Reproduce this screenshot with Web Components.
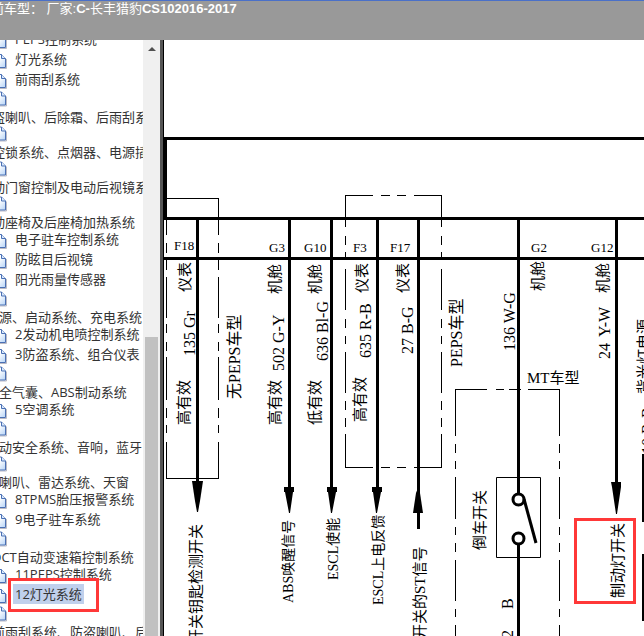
<!DOCTYPE html>
<html lang="zh-CN">
<head>
<meta charset="utf-8">
<title>长丰猎豹CS10 电路图</title>
<style>
  body {
    margin: 0;
  }
</style>
</head>
<body>
<manual-page>
  <vehicle-bar slot="header">前车型： 厂家:<b>C-</b>长丰猎豹<b>CS102016-2017</b></vehicle-bar>
  <system-tree slot="sidebar">
    <tree-item>PEPS控制系统</tree-item>
    <tree-item>灯光系统</tree-item>
    <tree-item>前雨刮系统</tree-item>
    <tree-item wrapped cut>盗喇叭、后除霜、后雨刮系</tree-item>
    <tree-item wrapped cut>控锁系统、点烟器、电源插</tree-item>
    <tree-item wrapped cut>动门窗控制及电动后视镜系</tree-item>
    <tree-item wrapped cut>动座椅及后座椅加热系统</tree-item>
    <tree-item>电子驻车控制系统</tree-item>
    <tree-item>防眩目后视镜</tree-item>
    <tree-item>阳光雨量传感器</tree-item>
    <tree-item wrapped>源、启动系统、充电系统</tree-item>
    <tree-item>2发动机电喷控制系统</tree-item>
    <tree-item>3防盗系统、组合仪表</tree-item>
    <tree-item wrapped>全气囊、ABS制动系统</tree-item>
    <tree-item>5空调系统</tree-item>
    <tree-item wrapped>动安全系统、音响，蓝牙</tree-item>
    <tree-item wrapped>喇叭、雷达系统、天窗</tree-item>
    <tree-item>8TPMS胎压报警系统</tree-item>
    <tree-item>9电子驻车系统</tree-item>
    <tree-item wrapped cut>DCT自动变速箱控制系统</tree-item>
    <tree-item>11PEPS控制系统</tree-item>
    <tree-item selected>12灯光系统</tree-item>
    <tree-item wrapped cut>前雨刮系统、防盗喇叭、后</tree-item>
  </system-tree>
  <wiring-diagram></wiring-diagram>
</manual-page>

<script>
class ManualPage extends HTMLElement {
  constructor() {
    super();

    this.attachShadow({ mode: 'open' });
  }

  connectedCallback() {
    this.shadowRoot.innerHTML = `
      <style>
        :host {
          display: flex;
          flex-direction: column;
          height: 100vh;
          overflow: hidden;
          background: #fff;
        }

        main {
          display: flex;
          flex: 1;
          min-height: 0;
        }
      </style>
      <slot name="header"></slot>
      <main>
        <slot name="sidebar"></slot>
        <slot></slot>
      </main>
    `;
  }
}

class VehicleBar extends HTMLElement {
  constructor() {
    super();

    this.attachShadow({ mode: 'open' });
  }

  connectedCallback() {
    this.shadowRoot.innerHTML = `
      <style>
        :host {
          display: block;
          flex: none;
          box-sizing: border-box;
          height: 40px;
          border-top: 1px solid #4a70c8;
          background: #999;
          color: #fff;
          font: 13px/16px "Liberation Sans", "Noto Sans CJK SC", sans-serif;
          white-space: nowrap;
          overflow: hidden;
        }

        header {
          margin-left: -9px;
        }
      </style>
      <header><slot></slot></header>
    `;
  }
}

class SystemTree extends HTMLElement {
  constructor() {
    super();

    this.attachShadow({ mode: 'open' });
  }

  connectedCallback() {
    this.shadowRoot.innerHTML = `
      <style>
        :host {
          display: flex;
          flex: none;
          position: relative;
          overflow: hidden;
          border-right: 1px solid #000;
          font: 13px/20px "Open Sans", "Noto Sans CJK SC", sans-serif;
          color: #333;
        }

        nav {
          width: 143px;
          margin-top: -11px;
          overflow: hidden;
        }

        .track {
          display: flex;
          flex-direction: column;
          align-items: center;
          width: 17px;
          background: #f0f0f0;
          border-right: 3px solid #555;
        }

        .track svg {
          width: 8px;
          height: 4px;
          margin-top: 7px;
          fill: #505050;
        }

        .thumb {
          flex: 1;
          width: 13px;
          margin-top: 286px;
          background: #c1c1c1;
        }
      </style>
      <nav><slot></slot></nav>
      <div class="track">
        <svg viewBox="0 0 8 4"><path d="M4 0l4 4H0z"/></svg>
        <div class="thumb"></div>
      </div>
    `;
  }
}

class TreeItem extends HTMLElement {
  constructor() {
    super();

    this.attachShadow({ mode: 'open' });
  }

  connectedCallback() {
    this.shadowRoot.innerHTML = `
      <style>
        :host {
          display: block;
          position: relative;
          white-space: nowrap;
        }

        a {
          display: flex;
          align-items: center;
          gap: 6px;
          height: 20px;
          margin-left: -9px;
          color: inherit;
          text-decoration: none;
        }

        svg {
          flex: none;
          width: 16px;
          height: 16px;
          margin-top: 4px;
        }

        span {
          padding: 0 2px;
        }

        /* long names drop below their icon */
        :host([wrapped]) a {
          display: block;
          height: 35px;
        }

        :host([wrapped]) svg {
          display: block;
          height: 19px;
          margin-top: 0;
        }

        :host([wrapped]) span {
          display: block;
          padding: 0 0 0 8px;
          line-height: 18px;
        }

        :host([wrapped][cut]) span {
          padding: 0 0 0 1px;
        }

        :host([selected]) span {
          background: #c0d0ec;
        }

        .mark {
          display: none;
        }

        :host([selected]) .mark {
          display: block;
          position: absolute;
          left: 8px;
          top: -6px;
          box-sizing: border-box;
          width: 91px;
          height: 34px;
          border: 3px solid #ff3838;
        }
      </style>
      <a href="#">
        <svg viewBox="0 0 16 16" aria-hidden="true">
          <defs>
            <linearGradient id="sheet" x2="1" y2="1">
              <stop offset="0.4" stop-color="#fff"/>
              <stop offset="1" stop-color="#b5d3f7"/>
            </linearGradient>
          </defs>
          <path d="M3 15.5h12.5V6" fill="none" stroke="#b9b9c4"/>
          <path d="M2.500 1.500h8l4 4v9h-12z" fill="url(#sheet)" stroke="#4a70b4"/>
          <path d="M10.500 1.500v4h4" fill="#dbe9fb" stroke="#4a70b4"/>
        </svg>
        <span><slot></slot></span>
      </a>
      <div class="mark"></div>
    `;
  }
}

// [x, y, text]
const PINS = [
  [174, 250, 'F18'],
  [269, 252, 'G3'],
  [304, 252, 'G10'],
  [353, 252, 'F3'],
  [390, 252, 'F17'],
  [531, 252, 'G2'],
  [591, 252, 'G12'],
];

// upright-reading labels turned a quarter left: [baseline x, bottom y, class, text]
const LABELS = [
  [190, 292, 'note', '仪表'],
  [195, 356, 'wire', '135 Gr'],
  [189, 425, 'note', '高有效'],
  [240, 399, 'model', '无PEPS车型'],
  [280, 294, 'note', '机舱'],
  [284, 371, 'wire', '502 G-Y'],
  [280, 425, 'note', '高有效'],
  [320, 294, 'note', '机舱'],
  [328, 361, 'wire', '636 Bl-G'],
  [320, 425, 'note', '低有效'],
  [367, 293, 'note', '仪表'],
  [371, 358, 'wire', '635 R-B'],
  [365, 422, 'note', '高有效'],
  [408, 293, 'note', '仪表'],
  [413, 354, 'wire', '27 B-G'],
  [462, 367, 'model', 'PEPS车型'],
  [543, 291, 'note', '机舱'],
  [515, 351, 'wire', '136 W-G'],
  [608, 293, 'note', '机舱'],
  [610, 359, 'wire', '24'],
  [610, 337, 'wire', 'Y-W'],
  [201, 644, 'note', '开关钥匙检测开关'],
  [293, 603, 'signal', 'ABS唤醒信号'],
  [338, 580, 'signal', 'ESCL使能'],
  [383, 605, 'signal', 'ESCL上电反馈'],
  [425, 639, 'note', '开关的ST信号'],
  [485, 550, 'note', '倒车开关'],
  [623, 598, 'note', '制动灯开关'],
  [513, 609, 'wire', 'B'],
  [513, 638, 'wire', '2'],
  [649, 394, 'note', '背光灯电源'],
  [653, 454, 'wire', '10 R-B'],
];

class WiringDiagram extends HTMLElement {
  constructor() {
    super();

    this.attachShadow({ mode: 'open' });
  }

  connectedCallback() {
    const pins = PINS.map(([x, y, text]) => `<text class="pin" x="${x}" y="${y}">${text}</text>`).join('');
    const labels = LABELS.map(
      ([x, y, kind, text]) => `<text class="${kind}" transform="translate(${x} ${y}) rotate(-90)">${text}</text>`
    ).join('');

    this.shadowRoot.innerHTML = `
      <style>
        :host {
          display: block;
          flex: 1;
          min-width: 0;
          background: #fff;
        }

        svg {
          display: block;
          width: 100%;
          height: 100%;
        }

        text {
          font-family: "Liberation Serif", "Noto Sans CJK SC", serif;
          font-size: 15px;
          fill: #000;
        }

        .pin {
          font-size: 13px;
        }

        .wire,
        .model {
          font-size: 16px;
        }

        .signal {
          font-size: 14px;
        }

        .heavy {
          fill: none;
          stroke: #000;
          stroke-width: 3;
        }

        .thin {
          fill: none;
          stroke: #000;
          stroke-width: 1;
        }
      </style>
      <svg viewBox="164 40 480 596" preserveAspectRatio="xMinYMin slice" role="img" aria-label="灯光系统电路图">
        <g class="heavy">
          <path d="M644 138.500H165.500V218.500H644M164 258.500H644"/>
          <path d="M197.500 218V484M289.500 218V489M331.500 218V489M377.500 218V489M418.500 218V529M616.500 218V485"/>
          <path d="M518.500 218V494M518.500 545V636M643.500 454V522M643.500 554V621"/>
          <circle cx="518.500" cy="499.500" r="5.500"/>
          <circle cx="518.500" cy="538.500" r="5.500"/>
          <path d="M524 499L536 543"/>
        </g>
        <g>
          <path d="M192 481h11l-3 20-2 11h-1l-2-11z"/>
          <path d="M284 487h10v5h-1l-3 21h-1l-4-21h-1z"/>
          <path d="M327 487h10v5h-1l-4 21h-1l-3-21h-1z"/>
          <path d="M372 487h10v5h-1l-4 21h-1l-3-21h-1z"/>
          <path d="M418 488l2 5 3 20h-10l3-20z"/>
          <path d="M611 482h10v5l-4 27h-1l-4-27z"/>
        </g>
        <g class="thin">
          <path d="M166.500 198.500H218.500M166.500 478.500H218.500M496.500 477.500H540.500V557.500H496.500z"/>
          <path d="M166.500 198V479M218.500 198V479" stroke-dasharray="37 8 10 6 11 7 41 6 9 9 9 6 43 8 10 7 8 9 40 0"/>
          <path d="M345 195.500H442M345 467.500H442" stroke-dasharray="28 8 9 7 9 8 28 0"/>
          <path d="M345.500 195V468M441.500 195V468" stroke-dasharray="32 9 9 7 8 9 41 9 9 8 8 8 41 8 9 8 9 7 40 0"/>
          <path d="M455 389.500H560" stroke-dasharray="32 9 8 5 12 7 40 0"/>
          <path d="M455.500 389V636M559.500 389V636" stroke-dasharray="47 8 9 8 8 8 42 8 8 8 9 8 41 8 8 8 40 0"/>
        </g>
        ${pins}
        <text class="note" x="527" y="383">MT车型</text>
        ${labels}
        <rect x="575.500" y="519.500" width="59" height="83" fill="none" stroke="#ff3838" stroke-width="3"/>
      </svg>
    `;
  }
}

customElements.define('manual-page', ManualPage);
customElements.define('vehicle-bar', VehicleBar);
customElements.define('system-tree', SystemTree);
customElements.define('tree-item', TreeItem);
customElements.define('wiring-diagram', WiringDiagram);
</script>
</body>
</html>
